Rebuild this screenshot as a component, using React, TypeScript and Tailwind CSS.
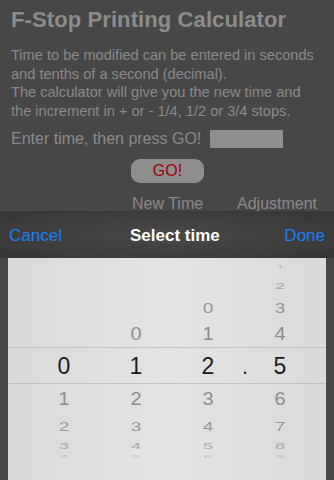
import React from "react";

type Row = { h: number; size: number; sy: number; color: string; cells: (string | null)[] };

const rows: Row[] = [
  { h: 18, size: 16, sy: 0.2, color: "#bdbdbd", cells: [null, null, null, "1"] },
  { h: 20, size: 18, sy: 0.55, color: "#a8a8a8", cells: [null, null, null, "2"] },
  { h: 24, size: 19, sy: 0.75, color: "#979797", cells: [null, null, "0", "3"] },
  { h: 28, size: 20, sy: 0.9, color: "#8c8c8c", cells: [null, "0", "1", "4"] },
  { h: 36, size: 23, sy: 1, color: "#1c1c1c", cells: ["0", "1", "2", "5"] },
  { h: 29, size: 20, sy: 0.9, color: "#8c8c8c", cells: ["1", "2", "3", "6"] },
  { h: 26, size: 19, sy: 0.72, color: "#979797", cells: ["2", "3", "4", "7"] },
  { h: 14, size: 18, sy: 0.5, color: "#a8a8a8", cells: ["3", "4", "5", "8"] },
  { h: 8, size: 16, sy: 0.2, color: "#bdbdbd", cells: ["4", "5", "6", "9"] },
];

export default function App() {
  return (
    <div
      className="w-[334px] h-[480px] overflow-hidden bg-[#474747] flex flex-col"
      style={{ fontFamily: '"Liberation Sans", Arial, sans-serif' }}
    >
      <div className="px-[11px] pt-[7px] h-[211px] flex flex-col">
        <h1 className="text-[22px] leading-[26px] font-bold text-[#8c8c8c] tracking-[0.1px]">
          F-Stop Printing Calculator
        </h1>
        <p className="mt-[13px] text-[14.6px] leading-[18.7px] text-[#8a8a8a] whitespace-nowrap">
          Time to be modified can be entered in seconds
          <br />
          and tenths of a second (decimal).
          <br />
          The calculator will give you the new time and
          <br />
          the increment in + or - 1/4, 1/2 or 3/4 stops.
        </p>
        <div className="mt-[9px] flex items-center h-[19px]">
          <span className="text-[16px] text-[#8a8a8a] w-[199px] whitespace-nowrap">Enter time, then press GO!</span>
          <div className="w-[73px] h-[18px] bg-[#8e8e8e]" />
        </div>
        <div className="mt-[10px] ml-[120px] w-[73px] h-[29px] rounded-[9px] bg-[#8e8e8e] flex items-center justify-center text-[16px] text-[#a00000]">
          GO!
        </div>
        <div className="mt-[11px] flex text-[16px] text-[#8a8a8a] leading-[20px] whitespace-nowrap">
          <span className="ml-[121px] w-[105px]">New Time</span>
          <span>Adjustment</span>
        </div>
      </div>
      <div className="h-px bg-[#393939]" />
      <div className="h-[46px] flex items-center px-[9px] bg-[radial-gradient(ellipse_at_center,#484848_0%,#3c3c3c_70%,#343434_100%)]">
        <span className="text-[17px] text-[#1a7cf5] w-[120px] pt-[1px]">Cancel</span>
        <span className="flex-1 text-[17px] font-bold text-white pt-[1px] pl-[1px]">Select time</span>
        <span className="text-[17px] text-[#1a7cf5] pt-[1px]">Done</span>
      </div>
      <div className="relative flex-1 mx-[8px] bg-[linear-gradient(to_right,#dadada,#e4e4e4_50%,#dadada)] flex flex-col">
        <div className="absolute left-0 right-0 top-[89px] h-[37px] border-y border-[#c3c3c3] pointer-events-none" />
        {rows.map((r, i) => (
          <div key={i} className="flex pl-[36px] gap-[32px]" style={{ height: r.h }}>
            {r.cells.map((c, j) => (
              <div key={j} className="w-[40px] flex items-center justify-center relative">
                {j === 3 && i === 4 && (
                  <span className="absolute left-[-18px] top-[8px] text-[22px] leading-none text-[#1c1c1c]">.</span>
                )}
                {c !== null && (
                  <span
                    className="leading-none inline-block"
                    style={{ fontSize: r.size, color: r.color, transform: `scaleY(${r.sy})` }}
                  >
                    {c}
                  </span>
                )}
              </div>
            ))}
          </div>
        ))}
      </div>
    </div>
  );
}
